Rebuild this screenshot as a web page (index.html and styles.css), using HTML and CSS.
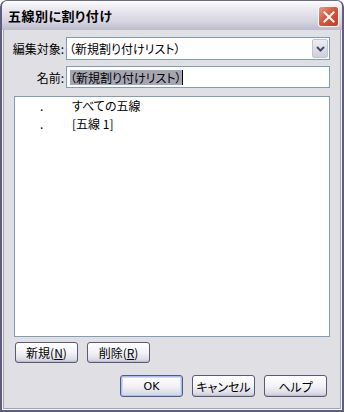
FILE: index.html
```html
<!DOCTYPE html>
<html>
<head>
  <title>五線別に割り付け</title>
  <link rel="stylesheet" href="styles.css">
</head>
<body>
  <div class="window">
    <div class="titlebar">
      <span class="title">五線別に割り付け</span>
      <span class="close">
        <svg width="12" height="12" viewBox="0 0 12 12">
          <path d="M1.5 1.5 L10.5 10.5 M10.5 1.5 L1.5 10.5" stroke="#fff" stroke-width="2" stroke-linecap="square"/>
        </svg>
      </span>
    </div>

    <div class="frame">
      <div class="form">
        <label>編集対象:</label>
        <div class="combo">
          <span class="combo-text">（新規割り付けリスト）</span>
          <span class="combo-btn">
            <svg width="9" height="6" viewBox="0 0 9 6">
              <path d="M1 1 L4.5 4.5 L8 1" fill="none" stroke="#4a4a6a" stroke-width="2"/>
            </svg>
          </span>
        </div>

        <label>名前:</label>
        <div class="textbox">
          <span class="selected">（新規割り付けリスト）</span><span class="caret"></span>
        </div>
      </div>

      <div class="listbox">
        <div class="item"><span class="dot">.</span><span>すべての五線</span></div>
        <div class="item"><span class="dot">.</span><span>[五線 1]</span></div>
      </div>

      <div class="list-buttons">
        <button>新規(<u>N</u>)</button>
        <button>削除(<u>R</u>)</button>
      </div>

      <div class="dialog-buttons">
        <button class="default latin">OK</button>
        <button>キャンセル</button>
        <button>ヘルプ</button>
      </div>
    </div>
  </div>
</body>
</html>
```

FILE: styles.css
```css
/* ダイアログ全体 */
body {
  margin: 0;
  font-family: "Noto Sans CJK JP", "DejaVu Sans", sans-serif;
  font-size: 12px;
  font-feature-settings: "palt";
  color: #000;
  background: #fff;
}
.window {
  width: 344px;
  height: 412px;
  box-sizing: border-box;
  border: 2px solid #5f5e7e;
  border-top: 1px solid #6b6a88;
  border-radius: 7px 7px 0 0;
  background: #e0dfe3;
  display: flex;
  flex-direction: column;
  overflow: hidden;
}

/* タイトルバー */
.titlebar {
  height: 29px;
  display: flex;
  align-items: center;
  justify-content: space-between;
  padding: 0 3px 0 6px;
  background: linear-gradient(#fdfdfe 0%, #ecebf1 25%, #d6d5e0 70%, #bdbccd 100%);
}
.title {
  font-size: 13px;
  font-weight: bold;
  letter-spacing: 0.5px;
}
.close {
  width: 19px;
  height: 19px;
  border: 1px solid #fff;
  border-radius: 3px;
  background: linear-gradient(135deg, #eb9a86 0%, #d9583e 45%, #c03c22 100%);
  display: flex;
  align-items: center;
  justify-content: center;
  margin-top: 2px;
}

/* 本体 */
.frame {
  flex: 1;
  padding: 7px 12px 0 8px;
  box-shadow: inset 1px 0 #f6f6fa, inset -1px 0 #f6f6fa, inset 0 -1px #f6f6fa,
    inset 2px 0 #a3a2b8, inset -2px 0 #a3a2b8, inset 0 -2px #a3a2b8;
}
.form {
  display: grid;
  grid-template-columns: 54px 264px;
  column-gap: 2px;
  row-gap: 6px;
  align-items: center;
}
.form label {
  text-align: right;
}
.combo {
  height: 23px;
  box-sizing: border-box;
  border: 1px solid #7f9db9;
  background: #fff;
  display: flex;
  align-items: center;
  padding: 0 1px 0 2px;
}
.combo-text {
  flex: 1;
}
.combo-btn {
  width: 16px;
  height: 19px;
  box-sizing: border-box;
  border: 1px solid #c4c3d3;
  border-radius: 2px;
  background: linear-gradient(#eeeef4, #cfcedc);
  display: flex;
  align-items: center;
  justify-content: center;
}
.textbox {
  height: 22px;
  box-sizing: border-box;
  border: 1px solid #7f9db9;
  background: #fff;
  display: flex;
  align-items: center;
  padding: 0 3px;
}
.selected {
  background: #a6a6b3;
  line-height: 15px;
}
.caret {
  width: 1px;
  height: 15px;
  background: #000;
}

/* リスト */
.listbox {
  width: 316px;
  height: 241px;
  box-sizing: border-box;
  margin: 8px 0 0 4px;
  border: 1px solid #7f9db9;
  background: #fff;
  padding-top: 0;
}
.item {
  height: 18px;
  line-height: 18px;
  display: flex;
}
.dot {
  width: 32px;
  padding-left: 25px;
}

/* ボタン */
button {
  width: 63px;
  height: 21px;
  padding: 0;
  font-family: inherit;
  font-size: 12px;
  font-feature-settings: "palt";
  color: #000;
  border: 1px solid #5a5a78;
  border-radius: 3px;
  background: linear-gradient(#ffffff 0%, #f3f3f7 50%, #dddde6 85%, #c8c8d6 100%);
  box-shadow: inset 0 -1px #bcbccc;
}
button u {
  text-decoration: underline;
}
.latin {
  font-family: "DejaVu Sans", sans-serif;
  font-size: 11px;
}
.default {
  box-shadow: inset 0 0 0 1px #a7bef0, inset 0 0 0 2px #cfdaf5;
}
.list-buttons {
  display: flex;
  gap: 9px;
  margin: 5px 0 0 5px;
}
.dialog-buttons {
  display: flex;
  justify-content: flex-end;
  gap: 9px;
  margin: 12px 3px 0 0;
}
.dialog-buttons button {
  height: 22px;
}
```
